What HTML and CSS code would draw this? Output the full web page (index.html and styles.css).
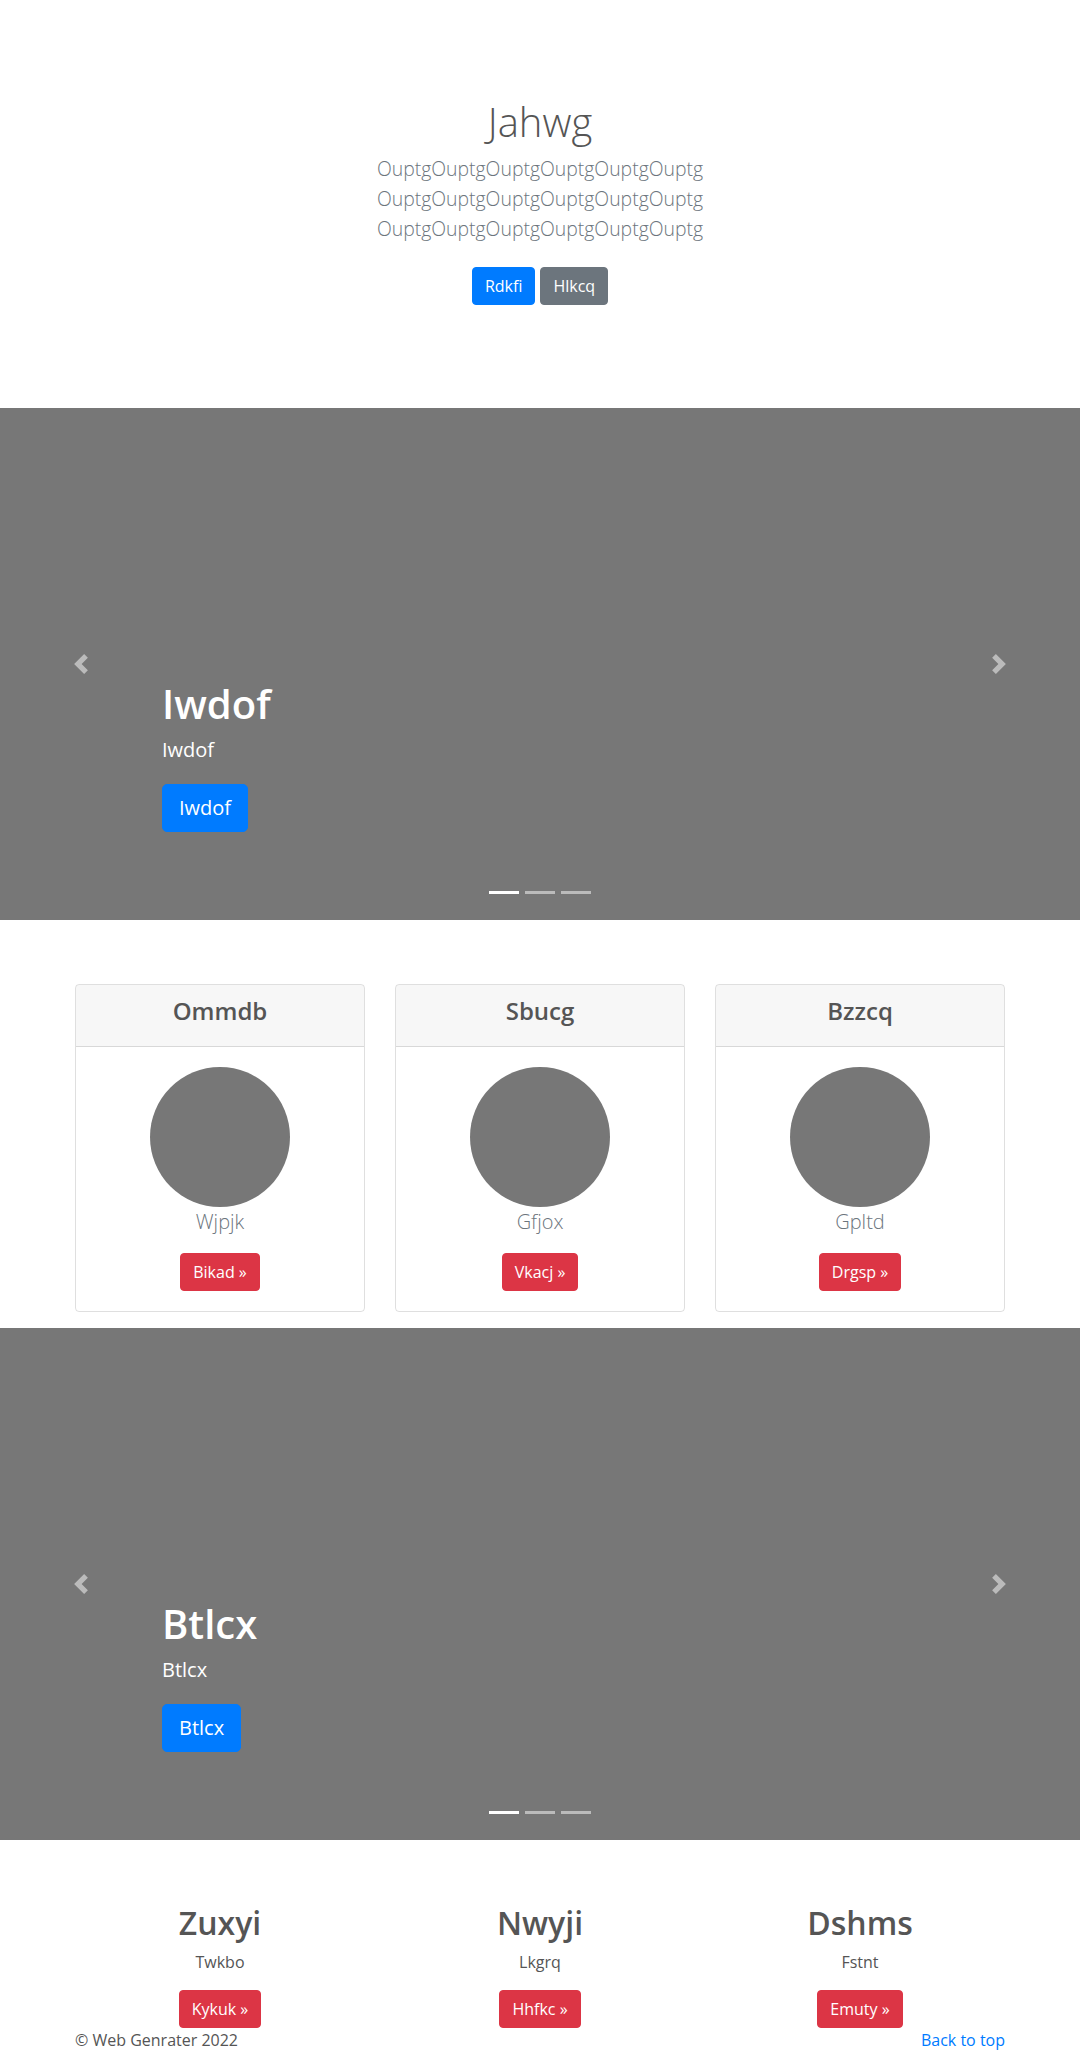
FILE: index.html
```html
<!DOCTYPE html>
<html lang="en">
<head>
<meta charset="utf-8">
<title>Web Genrater</title>
<link rel="stylesheet" href="styles.css">
</head>
<body>
<section class="hero">
  <h1 class="hero-title">Jahwg</h1>
  <p class="lead hero-lead">OuptgOuptgOuptgOuptgOuptgOuptg OuptgOuptgOuptgOuptgOuptgOuptg OuptgOuptgOuptgOuptgOuptgOuptg</p>
  <div class="hero-actions">
    <a href="#" class="btn btn-primary">Rdkfi</a>
    <a href="#" class="btn btn-secondary">Hlkcq</a>
  </div>
</section>

<div class="carousel">
  <div class="slide">
    <div class="caption">
      <h1 class="caption-title">Iwdof</h1>
      <p class="caption-text">Iwdof</p>
      <a href="#" class="btn btn-lg btn-primary">Iwdof</a>
    </div>
  </div>
  <a href="#" class="control control-prev" aria-label="Previous">
    <svg width="20" height="20" viewBox="0 0 8 8"><path fill="#fff" d="M5.25 0l-4 4 4 4 1.5-1.5L4.25 4l2.5-2.5L5.25 0z"/></svg>
  </a>
  <a href="#" class="control control-next" aria-label="Next">
    <svg width="20" height="20" viewBox="0 0 8 8"><path fill="#fff" d="M2.75 0l-1.5 1.5L3.75 4l-2.5 2.5L2.75 8l4-4-4-4z"/></svg>
  </a>
  <ol class="indicators">
    <li class="active"></li>
    <li></li>
    <li></li>
  </ol>
</div>

<section class="container cards">
  <div class="card">
    <div class="card-header"><h4 class="card-title">Ommdb</h4></div>
    <div class="card-body">
      <div class="circle"></div>
      <p class="lead card-lead">Wjpjk</p>
      <a href="#" class="btn btn-danger">Bikad &raquo;</a>
    </div>
  </div>
  <div class="card">
    <div class="card-header"><h4 class="card-title">Sbucg</h4></div>
    <div class="card-body">
      <div class="circle"></div>
      <p class="lead card-lead">Gfjox</p>
      <a href="#" class="btn btn-danger">Vkacj &raquo;</a>
    </div>
  </div>
  <div class="card">
    <div class="card-header"><h4 class="card-title">Bzzcq</h4></div>
    <div class="card-body">
      <div class="circle"></div>
      <p class="lead card-lead">Gpltd</p>
      <a href="#" class="btn btn-danger">Drgsp &raquo;</a>
    </div>
  </div>
</section>

<div class="carousel">
  <div class="slide">
    <div class="caption">
      <h1 class="caption-title">Btlcx</h1>
      <p class="caption-text">Btlcx</p>
      <a href="#" class="btn btn-lg btn-primary">Btlcx</a>
    </div>
  </div>
  <a href="#" class="control control-prev" aria-label="Previous">
    <svg width="20" height="20" viewBox="0 0 8 8"><path fill="#fff" d="M5.25 0l-4 4 4 4 1.5-1.5L4.25 4l2.5-2.5L5.25 0z"/></svg>
  </a>
  <a href="#" class="control control-next" aria-label="Next">
    <svg width="20" height="20" viewBox="0 0 8 8"><path fill="#fff" d="M2.75 0l-1.5 1.5L3.75 4l-2.5 2.5L2.75 8l4-4-4-4z"/></svg>
  </a>
  <ol class="indicators">
    <li class="active"></li>
    <li></li>
    <li></li>
  </ol>
</div>

<section class="container marketing">
  <div class="feature">
    <h2 class="feature-title">Zuxyi</h2>
    <p class="feature-text">Twkbo</p>
    <div class="feature-action"><a href="#" class="btn btn-danger">Kykuk &raquo;</a></div>
  </div>
  <div class="feature">
    <h2 class="feature-title">Nwyji</h2>
    <p class="feature-text">Lkgrq</p>
    <div class="feature-action"><a href="#" class="btn btn-danger">Hhfkc &raquo;</a></div>
  </div>
  <div class="feature">
    <h2 class="feature-title">Dshms</h2>
    <p class="feature-text">Fstnt</p>
    <div class="feature-action"><a href="#" class="btn btn-danger">Emuty &raquo;</a></div>
  </div>
</section>

<footer class="container footer">
  <p class="footer-copy">&copy; Web Genrater 2022</p>
  <a href="#" class="footer-top">Back to top</a>
</footer>
</body>
</html>
```

FILE: styles.css
```css
* {
  box-sizing: border-box;
}

body {
  margin: 0;
  font-family: "Open Sans", "Noto Sans", "Liberation Sans", sans-serif;
  font-size: 16px;
  line-height: 1.5;
  color: #555;
  background: #fff;
}

a {
  text-decoration: none;
}

.container {
  width: 960px;
  margin-left: auto;
  margin-right: auto;
  padding-left: 15px;
  padding-right: 15px;
}

/* Buttons */
.btn {
  display: inline-block;
  font-size: 16px;
  line-height: 24px;
  padding: 6px 12px;
  border: 1px solid transparent;
  border-radius: 4px;
  color: #fff;
  font-weight: 400;
  text-align: center;
  white-space: nowrap;
}

.btn-lg {
  font-size: 20px;
  line-height: 30px;
  padding: 8px 16px;
  border-radius: 5px;
}

.btn-primary {
  background: #007bff;
  border-color: #007bff;
}

.btn-secondary {
  background: #6c757d;
  border-color: #6c757d;
}

.btn-danger {
  background: #dc3545;
  border-color: #dc3545;
}

.lead {
  font-size: 20px;
  line-height: 30px;
  font-weight: 300;
}

/* Hero */
.hero {
  padding: 98px 0 103px;
  text-align: center;
}

.hero-title {
  margin: 0 0 8px;
  font-size: 40px;
  line-height: 48px;
  font-weight: 300;
  color: #555;
}

.hero-lead {
  width: 450px;
  margin: 0 auto 23px;
  color: #6c757d;
  font-size: 19.4px;
}

.hero-actions {
  display: flex;
  justify-content: center;
  gap: 5px;
}

/* Carousel */
.carousel {
  position: relative;
  height: 512px;
  background: #777;
  overflow: hidden;
}

.slide {
  height: 100%;
}

.caption {
  position: absolute;
  left: 15%;
  right: 15%;
  bottom: 48px;
  padding: 20px 0 40px;
  display: flex;
  flex-direction: column;
  align-items: flex-start;
  color: #fff;
  z-index: 2;
}

.caption-title {
  margin: 0 0 8px;
  font-size: 40px;
  line-height: 48px;
  font-weight: 600;
}

.caption-text {
  margin: 0 0 20px;
  font-size: 20px;
  line-height: 28px;
}

.control {
  position: absolute;
  top: 0;
  bottom: 0;
  width: 15%;
  display: flex;
  align-items: center;
  justify-content: center;
  opacity: 0.5;
  z-index: 1;
}

.control svg {
  display: block;
}

.control-prev {
  left: 0;
}

.control-next {
  right: 0;
}

.indicators {
  position: absolute;
  left: 15%;
  right: 15%;
  bottom: 26px;
  margin: 0;
  padding: 0;
  list-style: none;
  display: flex;
  justify-content: center;
  z-index: 3;
}

.indicators li {
  width: 30px;
  height: 3px;
  margin: 0 3px;
  background: #fff;
  opacity: 0.5;
}

.indicators li.active {
  opacity: 1;
}

/* Cards */
.cards {
  margin-top: 64px;
  margin-bottom: 16px;
  display: grid;
  grid-template-columns: repeat(3, 1fr);
  gap: 30px;
}

.card {
  border: 1px solid rgba(0, 0, 0, 0.125);
  border-radius: 4px;
  overflow: hidden;
  text-align: center;
}

.card-header {
  padding: 12px 20px;
  background: rgba(0, 0, 0, 0.03);
  border-bottom: 1px solid rgba(0, 0, 0, 0.125);
}

.card-title {
  margin: 0 0 8px;
  font-size: 24px;
  line-height: 28.8px;
  font-weight: 600;
  color: #555;
}

.card-body {
  padding: 20px;
  display: flex;
  flex-direction: column;
  align-items: center;
}

.circle {
  width: 140px;
  height: 140px;
  border-radius: 50%;
  background: #777;
}

.card-lead {
  margin: 0 0 16px;
  color: #6c757d;
}

/* Marketing */
.marketing {
  margin-top: 64px;
  display: grid;
  grid-template-columns: repeat(3, 1fr);
  gap: 30px;
  text-align: center;
}

.feature-title {
  margin: 0 0 8px;
  font-size: 32px;
  line-height: 38.4px;
  font-weight: 600;
  color: #555;
}

.feature-text {
  margin: 0 0 16px;
}

.feature-action {
  display: flex;
  justify-content: center;
}

/* Footer */
.footer {
  display: flex;
  justify-content: space-between;
  align-items: flex-start;
}

.footer-copy {
  margin: 0 0 16px;
}

.footer-top {
  color: #007bff;
}
```
